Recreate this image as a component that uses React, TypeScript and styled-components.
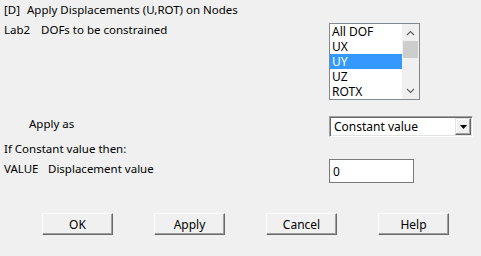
import React, { useState } from 'react';
import styled, { createGlobalStyle } from 'styled-components';

const dofs = ['All DOF', 'UX', 'UY', 'UZ', 'ROTX'];
const buttons = ['OK', 'Apply', 'Cancel', 'Help'];

const App: React.FC = () => {
  const [selected, setSelected] = useState('UY');
  const [value, setValue] = useState('0');

  return (
    <>
      <GlobalStyle />
      <Dialog>
        <Title>
          <Code width={23}>[D]</Code>Apply Displacements (U,ROT) on Nodes
        </Title>

        <FieldRow top={4}>
          <Label>
            <Code width={37}>Lab2</Code>DOFs to be constrained
          </Label>
          <ListBox>
            <Items>
              {dofs.map((d) => (
                <Item key={d} active={d === selected} onClick={() => setSelected(d)}>
                  {d}
                </Item>
              ))}
            </Items>
            <ScrollBar>
              <ArrowBox>
                <svg width="9" height="6" viewBox="0 0 9 6">
                  <path d="M1 5 L4.5 1.5 L8 5" fill="none" stroke="#606060" strokeWidth="1.2" />
                </svg>
              </ArrowBox>
              <Track>
                <Thumb />
              </Track>
              <ArrowBox>
                <svg width="9" height="6" viewBox="0 0 9 6">
                  <path d="M1 1 L4.5 4.5 L8 1" fill="none" stroke="#606060" strokeWidth="1.2" />
                </svg>
              </ArrowBox>
            </ScrollBar>
          </ListBox>
        </FieldRow>

        <FieldRow top={16}>
          <Label indent={25}>Apply as</Label>
          <Combo>
            <ComboText>Constant value</ComboText>
            <ComboButton>
              <svg width="7" height="4" viewBox="0 0 7 4">
                <path d="M0 0 H7 L3.5 4 Z" fill="#000" />
              </svg>
            </ComboButton>
          </Combo>
        </FieldRow>

        <Note>If Constant value then:</Note>

        <FieldRow top={2}>
          <Label pad={2}>
            <Code width={44}>VALUE</Code>Displacement value
          </Label>
          <TextInput value={value} onChange={(e) => setValue(e.target.value)} />
        </FieldRow>

        <ButtonBar>
          {buttons.map((b) => (
            <Button key={b}>{b}</Button>
          ))}
        </ButtonBar>
      </Dialog>
    </>
  );
};

// component style
const GlobalStyle = createGlobalStyle`
  html, body {
    margin: 0;
    padding: 0;
    background: #f0f0f0;
  }
  body {
    font-family: "Noto Sans", "Open Sans", sans-serif;
    font-size: 11.5px;
    color: #000;
  }
`;

const Dialog = styled.div`
  width: 481px;
  height: 256px;
  box-sizing: border-box;
  padding-left: 4px;
  background: #f0f0f0;
  display: flex;
  flex-direction: column;
`;

const Title = styled.div`
  margin-top: 2px;
  line-height: 16px;
  white-space: nowrap;
`;

const Code = styled.span<{ width: number }>`
  display: inline-block;
  width: ${(p) => p.width}px;
`;

const FieldRow = styled.div<{ top: number }>`
  display: grid;
  grid-template-columns: 325px auto;
  align-items: start;
  margin-top: ${(p) => p.top}px;
`;

const Label = styled.div<{ indent?: number; pad?: number }>`
  line-height: 16px;
  padding-left: ${(p) => p.indent ?? 0}px;
  padding-top: ${(p) => p.pad ?? 0}px;
  white-space: nowrap;
`;

const ListBox = styled.div`
  width: 91px;
  height: 77px;
  box-sizing: border-box;
  border: 1px solid #828790;
  background: #fff;
  display: flex;
  margin-top: 1px;
`;

const Items = styled.div`
  flex: 1;
`;

const Item = styled.div<{ active: boolean }>`
  height: 15px;
  line-height: 15px;
  padding-left: 2px;
  font-size: 12px;
  background: ${(p) => (p.active ? '#3399ff' : 'transparent')};
  color: ${(p) => (p.active ? '#fff' : '#000')};
  cursor: default;
`;

const ScrollBar = styled.div`
  width: 17px;
  background: #f0f0f0;
  display: flex;
  flex-direction: column;
`;

const ArrowBox = styled.div`
  height: 17px;
  display: flex;
  align-items: center;
  justify-content: center;
`;

const Track = styled.div`
  flex: 1;
  padding: 0 1px;
`;

const Thumb = styled.div`
  height: 17px;
  background: #cdcdcd;
`;

const Combo = styled.div`
  width: 144px;
  height: 21px;
  box-sizing: border-box;
  border-top: 1px solid #a0a0a0;
  border-left: 1px solid #a0a0a0;
  border-right: 1px solid #fff;
  border-bottom: 1px solid #fff;
  box-shadow: inset 1px 1px 0 #696969, inset -1px -1px 0 #e3e3e3;
  background: #fff;
  display: flex;
  align-items: stretch;
  padding: 1px;
`;

const ComboText = styled.div`
  flex: 1;
  line-height: 17px;
  padding-left: 3px;
  font-size: 12px;
`;

const ComboButton = styled.div`
  width: 16px;
  box-sizing: border-box;
  background: #f0f0f0;
  border-top: 1px solid #e3e3e3;
  border-left: 1px solid #e3e3e3;
  border-right: 1px solid #696969;
  border-bottom: 1px solid #696969;
  box-shadow: inset -1px -1px 0 #a0a0a0, inset 1px 1px 0 #fff;
  display: flex;
  align-items: center;
  justify-content: center;
`;

const Note = styled.div`
  margin-top: 4px;
  line-height: 16px;
`;

const TextInput = styled.input`
  width: 85px;
  height: 24px;
  box-sizing: border-box;
  border: 1px solid #7a7a7a;
  background: #fff;
  padding: 0 0 0 3px;
  font-family: "Noto Sans", "Open Sans", sans-serif;
  font-size: 12px;
  outline: none;
`;

const ButtonBar = styled.div`
  display: flex;
  gap: 41px;
  padding-left: 38px;
  margin-top: 30px;
`;

const Button = styled.button`
  width: 71px;
  height: 22px;
  box-sizing: border-box;
  background: #f0f0f0;
  border-top: 1px solid #fff;
  border-left: 1px solid #fff;
  border-right: 1px solid #696969;
  border-bottom: 1px solid #696969;
  box-shadow: inset -1px -1px 0 #a0a0a0;
  font-family: "Noto Sans", "Open Sans", sans-serif;
  font-size: 12px;
  color: #000;
  padding: 0;
  cursor: pointer;
`;

export default App;
